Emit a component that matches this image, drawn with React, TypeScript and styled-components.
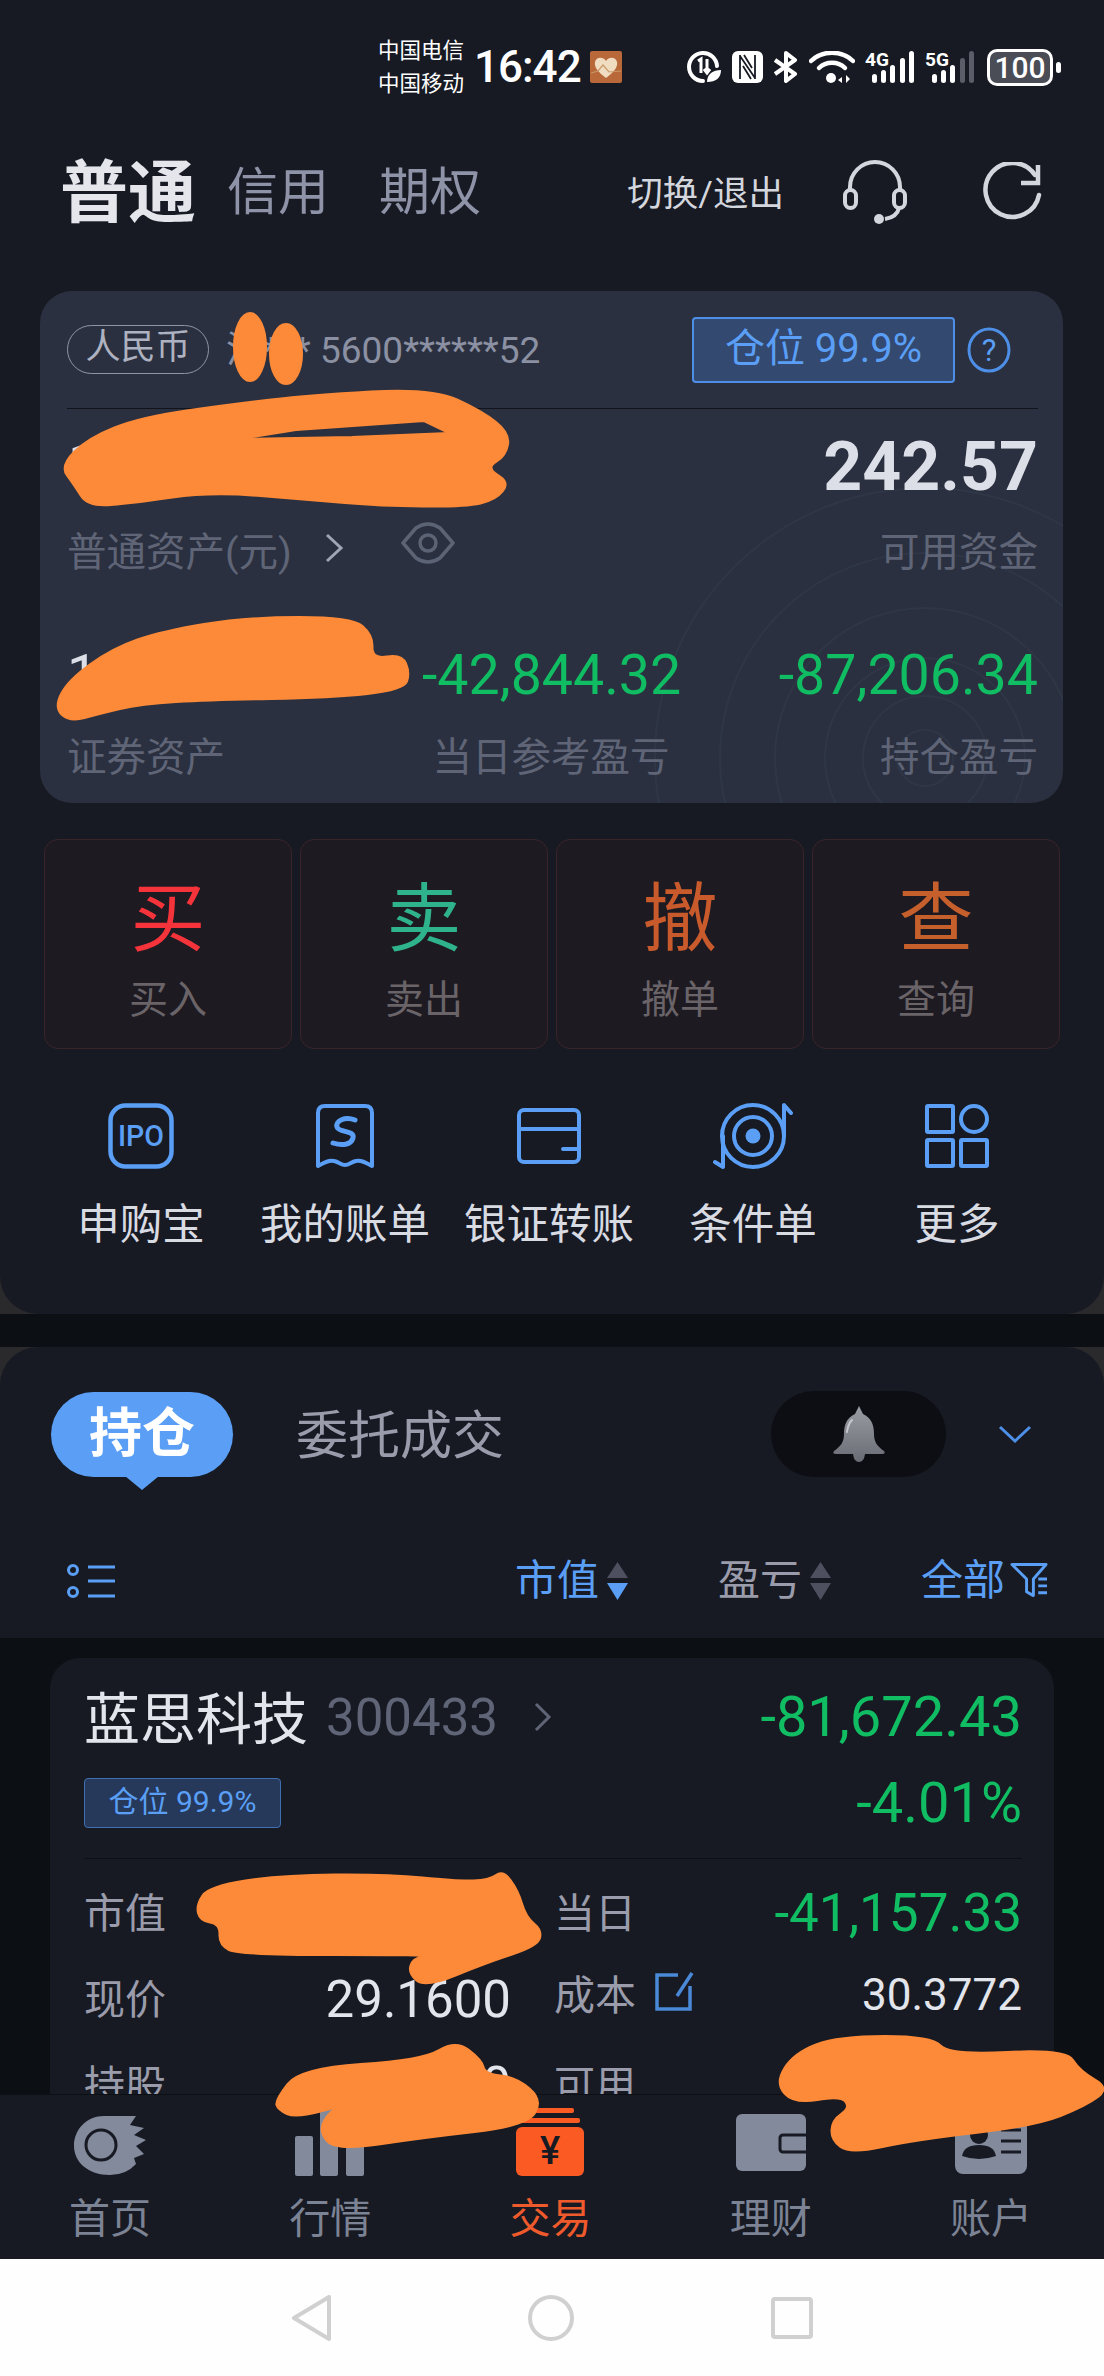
import React from 'react'
import styled, { createGlobalStyle } from 'styled-components'

const GlobalStyle = createGlobalStyle`
  html, body {
    margin: 0;
    padding: 0;
    background: #171a23;
  }
  * {
    box-sizing: border-box;
  }
`

const BLUE = '#5a9ff5'
const GREEN = '#10bd63'
const ORANGE = '#fd8a38'
const FONT = `Roboto, "Noto Sans CJK SC", sans-serif`

const Page = styled.div`
  position: relative;
  width: 1104px;
  height: 2376px;
  overflow: hidden;
  display: flex;
  flex-direction: column;
  font-family: ${FONT};
  background: #0c0f14;
`

/* top panel */
const CornerBack = styled.div`
  background: #2a2a2d;
`

const TopPanel = styled.section`
  height: 1314px;
  background: #171a23;
  border-radius: 0 0 38px 38px;
`

const StatusBar = styled.div`
  height: 134px;
  padding: 0 44px 0 378px;
  display: flex;
  align-items: center;
  color: #fff;
`

const Carriers = styled.div`
  font-size: 21.5px;
  line-height: 33px;
  width: 96px;
`

const Clock = styled.div`
  font-size: 44px;
  font-weight: 500;
  width: 116px;
  letter-spacing: -1px;
`

const StatusIcons = styled.div`
  margin-left: auto;
  display: flex;
  align-items: center;
  gap: 10px;
`

const Battery = styled.div`
  position: relative;
  width: 66px;
  height: 37px;
  margin-left: 2px;
  margin-right: 7px;
  border: 3px solid #fff;
  border-radius: 10px;
  background: #4a4c56;
  font-size: 30px;
  font-weight: 500;
  line-height: 31px;
  text-align: center;

  &::after {
    content: '';
    position: absolute;
    right: -11px;
    top: 10px;
    width: 5px;
    height: 11px;
    border-radius: 3px;
    background: #fff;
  }
`

const Header = styled.header`
  height: 112px;
  padding: 0 62px 0 60px;
  display: flex;
  align-items: center;
`

const MainTab = styled.div`
  font-size: 68px;
  font-weight: 700;
  color: #e4e6ec;
  width: 167px;
  padding-bottom: 6px;
`

const SubTab = styled.div`
  font-size: 51px;
  color: #8f93a8;
  width: 152px;
  padding-bottom: 5px;
`

const Switcher = styled.div`
  margin-left: auto;
  font-size: 35.5px;
  color: #d4d6de;
`

const HeaderIcon = styled.svg<{ $gap: number }>`
  margin-left: ${p => p.$gap}px;
  margin-top: 3px;
  flex: none;
`

/* account card */
const AccountCard = styled.div`
  position: relative;
  overflow: hidden;
  margin: 45px 41px 0 40px;
  height: 512px;
  padding: 0 25px 0 27px;
  border-radius: 32px;
  background: #2a303f;
`

const Rings = styled.svg`
  position: absolute;
  right: 0;
  bottom: 0;
`

const AccountTop = styled.div`
  position: relative;
  height: 118px;
  display: flex;
  align-items: center;
  border-bottom: 1px solid #12141b;
`

const CurrencyPill = styled.div`
  width: 142px;
  height: 49px;
  border: 1px solid #9096a6;
  border-radius: 25px;
  color: #aeb2c0;
  font-size: 35px;
  line-height: 44px;
  text-align: center;
`

const AccountNo = styled.div`
  margin-left: 17px;
  padding-bottom: 6px;
  font-size: 37px;
  color: #8b90a3;
`

const PositionBadge = styled.div`
  margin-left: auto;
  width: 263px;
  height: 66px;
  border: 2px solid #4d8fe6;
  border-radius: 4px;
  background: #33496f;
  color: ${BLUE};
  font-size: 40px;
  line-height: 60px;
  text-align: center;
`

const HelpIcon = styled.svg`
  margin: 0 27px 0 12px;
  flex: none;
`

const AssetRow = styled.div`
  position: relative;
  padding-top: 23px;
  display: flex;
  justify-content: space-between;
`

const ProfitRow = styled.div`
  position: relative;
  margin-top: 67px;
  display: grid;
  grid-template-columns: 355px 258px 1fr;
`

const Stat = styled.div<{ $align?: string }>`
  text-align: ${p => p.$align || 'left'};
`

const BigValue = styled.div`
  height: 70px;
  font-size: 68px;
  font-weight: 700;
  line-height: 70px;
  color: #dcdfe7;
`

const ProfitValue = styled.div<{ $color?: string }>`
  height: 70px;
  font-size: 55.5px;
  line-height: 70px;
  white-space: nowrap;
  color: ${p => p.$color || GREEN};
`

const StatLabel = styled.div<{ $top: number }>`
  margin-top: ${p => p.$top}px;
  display: flex;
  align-items: center;
  height: 52px;
  font-size: 39.5px;
  color: #5f6577;
  white-space: nowrap;
  justify-content: inherit;
`

const CenterLabel = styled(StatLabel)`
  justify-content: center;
`

const EndLabel = styled(StatLabel)`
  justify-content: flex-end;
`

const LabelIcon = styled.svg<{ $left: number; $lift?: number }>`
  margin-left: ${p => p.$left}px;
  margin-top: ${p => -(p.$lift || 0)}px;
  flex: none;
`

/* trade buttons */
const TradeGrid = styled.div`
  margin: 36px 0 0 44px;
  display: grid;
  grid-template-columns: repeat(4, 248px);
  gap: 8px;
`

const TradeButton = styled.div`
  height: 210px;
  padding-top: 39px;
  text-align: center;
  background: #1d1a22;
  border: 1px solid #3a2329;
  border-radius: 14px;
`

const TradeChar = styled.div<{ $color: string }>`
  font-size: 75px;
  line-height: 80px;
  color: ${p => p.$color};
`

const TradeLabel = styled.div`
  margin-top: 16px;
  font-size: 39px;
  line-height: 50px;
  color: #6a6468;
`

const ShortcutGrid = styled.div`
  margin: 54px 0 0 39px;
  display: grid;
  grid-template-columns: repeat(5, 204px);
`

const Shortcut = styled.div`
  display: flex;
  flex-direction: column;
  align-items: center;
`

const ShortcutIcon = styled.div`
  height: 66px;
  display: flex;
  align-items: center;
  justify-content: center;
`

const ShortcutLabel = styled.div`
  margin-top: 31px;
  font-size: 42.5px;
  line-height: 50px;
  color: #d9dbe3;
  white-space: nowrap;
`

const PanelGap = styled.div`
  height: 33px;
  background: #0c0f14;
`

/* positions panel */
const PositionPanel = styled.section`
  height: 291px;
  padding-top: 44px;
  background: #171a23;
  border-radius: 38px 38px 0 0;
`

const TabRow = styled.div`
  padding: 0 55px 0 51px;
  display: flex;
  align-items: center;
`

const Bubble = styled.div`
  position: relative;
  width: 182px;
  height: 85px;
  border-radius: 43px;
  background: ${BLUE};
  color: #fff;
  font-size: 53px;
  font-weight: 700;
  line-height: 84px;
  text-align: center;

  &::after {
    content: '';
    position: absolute;
    left: 74px;
    bottom: -13px;
    border-left: 17px solid transparent;
    border-right: 17px solid transparent;
    border-top: 14px solid ${BLUE};
  }
`

const OrdersTab = styled.div`
  margin-left: 63px;
  padding-bottom: 6px;
  font-size: 52px;
  color: #9a9cab;
`

const BellPill = styled.div`
  margin-left: auto;
  width: 175px;
  height: 86px;
  border-radius: 43px;
  background: #0c0e13;
  display: flex;
  align-items: center;
  justify-content: center;
`

const Chevron = styled.svg`
  margin-left: 52px;
  margin-right: 17px;
  flex: none;
`

const SortRow = styled.div`
  margin-top: 79px;
  height: 50px;
  padding: 0 56px 0 67px;
  display: flex;
  align-items: center;
`

const SortGroup = styled.div`
  margin-left: auto;
  display: flex;
  gap: 90px;
`

const SortItem = styled.div<{ $active?: boolean; $gap?: number }>`
  display: flex;
  align-items: center;
  gap: ${p => p.$gap || 8}px;
  font-size: 42px;
  line-height: 50px;
  color: ${p => (p.$active ? BLUE : '#9a9cab')};
`

const PositionList = styled.div`
  flex: 1;
  min-height: 0;
  overflow: hidden;
  padding: 20px 50px 0;
  background: #0c0f14;
`

const StockCard = styled.div`
  height: 600px;
  padding: 29px 32px 0 34px;
  border-radius: 30px 30px 0 0;
  background: #171a23;
`

const StockRow = styled.div<{ $top?: number }>`
  height: 60px;
  margin-top: ${p => p.$top || 0}px;
  display: flex;
  align-items: center;
  justify-content: space-between;
`

const StockTitle = styled.div`
  display: flex;
  align-items: center;
`

const StockName = styled.div`
  padding-bottom: 6px;
  font-size: 56px;
  color: #e3e5ec;
`

const StockCode = styled.div`
  margin-left: 18px;
  font-size: 51px;
  color: #5f6477;
`

const StockProfit = styled.div`
  font-size: 56px;
  color: ${GREEN};
`

const SmallBadge = styled.div`
  width: 197px;
  height: 50px;
  border: 1px solid #3f6fb0;
  border-radius: 4px;
  background: #26395a;
  color: ${BLUE};
  font-size: 30px;
  line-height: 46px;
  text-align: center;
`

const StockDivider = styled.div`
  height: 1px;
  margin-top: 25px;
  background: #0d0f14;
`

const DetailGrid = styled.div`
  padding-top: 11px;
  display: grid;
  grid-template-columns: 427px 1fr;
  grid-auto-rows: 86px;
  column-gap: 43px;
`

const DetailCell = styled.div<{ $raised?: boolean }>`
  display: flex;
  align-items: center;
  justify-content: space-between;
  padding-bottom: ${p => (p.$raised ? 8 : 0)}px;
`

const DetailLabel = styled.div`
  display: flex;
  align-items: center;
  padding-bottom: 6px;
  font-size: 41px;
  color: #9a9cab;
`

const DetailValue = styled.div<{ $size: number; $color?: string }>`
  font-size: ${p => p.$size}px;
  color: ${p => p.$color || '#e3e5ec'};
`

/* tab bar */
const TabBar = styled.nav`
  height: 165px;
  flex: none;
  padding: 13px 3px 0 0;
  border-top: 1px solid #0c0f14;
  background: #171a23;
  display: grid;
  grid-template-columns: repeat(5, 1fr);
`

const TabItem = styled.div<{ $active?: boolean }>`
  display: flex;
  flex-direction: column;
  align-items: center;
  color: ${p => (p.$active ? '#ee5a2b' : '#7c8394')};
`

const TabIcon = styled.div`
  height: 68px;
  display: flex;
  align-items: flex-end;
  justify-content: center;
`

const TabLabel = styled.div`
  margin-top: 18px;
  font-size: 41px;
  line-height: 50px;
`

const SystemNav = styled.div`
  height: 117px;
  flex: none;
  background: #fefefe;
  display: flex;
  align-items: center;
  justify-content: center;
  gap: 197px;
`

const Scribbles = styled.svg`
  position: absolute;
  left: 0;
  top: 0;
`

// closed curve through the midpoints of a marker outline
const smooth = (pts: number[][]) => {
  const mid = (a: number[], b: number[]) => `${(a[0] + b[0]) / 2} ${(a[1] + b[1]) / 2}`
  let d = `M${mid(pts[pts.length - 1], pts[0])}`
  pts.forEach((p, i) => {
    d += ` Q${p[0]} ${p[1]} ${mid(p, pts[(i + 1) % pts.length])}`
  })
  return d + ' Z'
}

const blobs = [
  [[60, 466], [88, 438], [141, 417], [232, 404], [310, 395], [432, 388], [482, 411], [510, 433], [506, 456], [486, 468], [510, 482], [496, 500], [465, 507], [380, 506], [310, 500], [211, 492], [134, 503], [88, 507], [74, 485]],
  [[54, 708], [68, 680], [113, 648], [162, 631], [246, 617], [352, 617], [373, 635], [372, 659], [402, 654], [410, 673], [404, 690], [331, 698], [211, 700], [141, 704], [99, 714], [70, 722]],
  [[196, 1905], [209, 1886], [282, 1875], [387, 1874], [458, 1881], [489, 1880], [503, 1870], [518, 1890], [526, 1917], [542, 1930], [538, 1946], [486, 1963], [425, 1988], [408, 1973], [413, 1958], [433, 1955], [239, 1955], [219, 1945], [220, 1924], [200, 1921]],
  [[275, 2100], [300, 2068], [422, 2060], [456, 2040], [482, 2060], [485, 2074], [516, 2077], [543, 2100], [527, 2126], [422, 2138], [335, 2151], [318, 2130], [331, 2110], [345, 2105], [296, 2118], [278, 2110]],
  [[775, 2083], [794, 2053], [838, 2036], [932, 2036], [949, 2055], [1066, 2049], [1080, 2071], [1110, 2088], [1086, 2106], [1035, 2126], [915, 2140], [850, 2154], [831, 2140], [832, 2120], [850, 2108], [841, 2096], [794, 2104]],
]

const blobHole = 'M239 439 L296 430 L424 421 L449 433 L352 437 Z'

const trades = [
  { char: '买', label: '买入', color: '#f5333a' },
  { char: '卖', label: '卖出', color: '#2fb38c' },
  { char: '撤', label: '撤单', color: '#c85a2b' },
  { char: '查', label: '查询', color: '#c55f2c' },
]

const blueLine = { fill: 'none', stroke: BLUE, strokeWidth: 4 }

const IpoIcon = () => (
  <svg width="66" height="66" viewBox="0 0 66 66">
    <rect x="2.5" y="2.5" width="61" height="61" rx="15" fill="none" stroke={BLUE} strokeWidth="4.5" />
    <text x="33" y="43" textAnchor="middle" fontFamily="Roboto" fontSize="29" fontWeight="500" textLength="46" lengthAdjust="spacingAndGlyphs" fill={BLUE}>IPO</text>
  </svg>
)

const BillIcon = () => (
  <svg width="60" height="66" viewBox="0 0 60 66">
    <path d="M3 63 V10 Q3 3 10 3 H50 Q57 3 57 10 V63 C50 59 46 57 41 58 C36 59 34 62 30 62 C26 62 24 59 19 58 C14 57 10 59 3 63 Z" {...blueLine} strokeLinejoin="round" />
    <path d="M40 17 C30 13 20 18 22 24 C24 30 40 27 38 35 C36 42 27 43 18 40" fill="none" stroke={BLUE} strokeWidth="5" strokeLinecap="round" />
  </svg>
)

const TransferIcon = () => (
  <svg width="64" height="56" viewBox="0 0 64 56">
    <rect x="2" y="2" width="60" height="52" rx="5" {...blueLine} />
    <path d="M2 21 H62 M46 41 H62" {...blueLine} strokeLinecap="round" />
  </svg>
)

const TargetIcon = () => (
  <svg width="80" height="72" viewBox="0 0 80 72">
    <circle cx="40" cy="36" r="31" {...blueLine} />
    <circle cx="40" cy="36" r="19" {...blueLine} />
    <circle cx="40" cy="36" r="7.5" fill={BLUE} />
    <path d="M78 13 L71 5 V36 M2 62 L10 67 V36" {...blueLine} strokeLinecap="round" strokeLinejoin="round" />
  </svg>
)

const MoreIcon = () => (
  <svg width="64" height="64" viewBox="0 0 64 64">
    <rect x="2" y="2" width="26" height="26" rx="1" {...blueLine} />
    <circle cx="49" cy="15" r="13" {...blueLine} />
    <rect x="2" y="36" width="26" height="26" rx="1" {...blueLine} />
    <rect x="36" y="36" width="26" height="26" rx="1" {...blueLine} />
  </svg>
)

const shortcuts = [
  { label: '申购宝', icon: <IpoIcon /> },
  { label: '我的账单', icon: <BillIcon /> },
  { label: '银证转账', icon: <TransferIcon /> },
  { label: '条件单', icon: <TargetIcon /> },
  { label: '更多', icon: <MoreIcon /> },
]

const SortArrows = ({ down, up }: { down?: boolean; up?: boolean }) => (
  <svg width="21" height="38" viewBox="0 0 21 38">
    <path d="M10.5 0 L21 16 H0 Z" fill={up ? BLUE : '#4e5060'} />
    <path d="M10.5 38 L21 21 H0 Z" fill={down ? BLUE : '#4e5060'} />
  </svg>
)

const SignalIcon = ({ label, dim }: { label: string; dim?: boolean }) => (
  <svg width="50" height="32" viewBox="0 0 50 32">
    <text x="0" y="15" fontFamily="Roboto" fontSize="19" fontWeight="700" fill="#fff" textLength="24" lengthAdjust="spacingAndGlyphs">{label}</text>
    <rect x="7" y="23" width="5" height="9" rx="2.5" fill="#fff" />
    <rect x="16" y="19" width="5" height="13" rx="2.5" fill="#fff" />
    <rect x="25" y="14" width="5" height="18" rx="2.5" fill="#fff" />
    <rect x="35" y="7" width="5" height="25" rx="2.5" fill={dim ? '#5b5e68' : '#fff'} />
    <rect x="44" y="0" width="5" height="32" rx="2.5" fill={dim ? '#5b5e68' : '#fff'} />
  </svg>
)

export default function App() {
  return (
    <Page>
      <GlobalStyle />
      <CornerBack>
        <TopPanel>
          <StatusBar>
            <Carriers>中国电信<br />中国移动</Carriers>
            <Clock>16:42</Clock>
            <svg width="32" height="32" viewBox="0 0 32 32">
              <rect width="32" height="32" rx="2" fill="#b9683a" />
              <path d="M16 27 C8 21 4 16 5 11 C6 6 13 5 16 10 C19 5 26 6 27 11 C28 16 24 21 16 27 Z" fill="#f0dcc0" />
              <path d="M1 22 L8 20 L13 14 L19 21 L31 20" fill="none" stroke="#c99a6a" strokeWidth="1.2" />
            </svg>
            <StatusIcons>
              <svg width="36" height="32" viewBox="0 0 36 32">
                <path d="M17 30 A14 14 0 1 1 31 15" fill="none" stroke="#fff" strokeWidth="4" strokeLinecap="round" />
                <path d="M12 10 L15 8 V22 M21 8 V21 M18 18 L21 22 L24 18" fill="none" stroke="#fff" strokeWidth="3" />
                <path d="M21 31 C21 23 27 19 35 19 C35 27 30 31 21 31 Z" fill="#fff" />
              </svg>
              <svg width="31" height="32" viewBox="0 0 31 32">
                <rect x="0" y="0" width="31" height="32" rx="6" fill="#fff" />
                <path d="M8 4 V28 M23 4 V28 M8 5 L23 27 M12 4 L20 17 M11 15 L19 28" fill="none" stroke="#171a23" strokeWidth="1.8" />
              </svg>
              <svg width="26" height="32" viewBox="0 0 26 32">
                <path d="M2 9 L22 23 L13 30 V2 L22 9 L2 23" fill="none" stroke="#fff" strokeWidth="4" strokeLinejoin="round" />
              </svg>
              <svg width="46" height="32" viewBox="0 0 46 32">
                <path d="M2 10 C13 -1 33 -1 44 10" fill="none" stroke="#fff" strokeWidth="4.5" strokeLinecap="round" />
                <path d="M10 17 C17 10 29 10 36 17" fill="none" stroke="#fff" strokeWidth="4.5" strokeLinecap="round" />
                <circle cx="22" cy="27" r="5" fill="#fff" />
                <path d="M33 26 L29 29 L33 32 Z M37 24 L41 28 L37 32 Z" fill="#fff" />
              </svg>
              <SignalIcon label="4G" />
              <SignalIcon label="5G" dim />
              <Battery>100</Battery>
            </StatusIcons>
          </StatusBar>

          <Header>
            <MainTab>普通</MainTab>
            <SubTab>信用</SubTab>
            <SubTab>期权</SubTab>
            <Switcher>切换/退出</Switcher>
            <HeaderIcon $gap={58} width="66" height="64" viewBox="0 0 66 64">
              <path d="M8 30 V27 A25 25 0 0 1 58 27 V30" fill="none" stroke="#d4d6de" strokeWidth="4" />
              <rect x="3" y="30" width="11" height="18" rx="5.5" fill="none" stroke="#d4d6de" strokeWidth="4" />
              <rect x="52" y="30" width="11" height="18" rx="5.5" fill="none" stroke="#d4d6de" strokeWidth="4" />
              <path d="M57 48 Q55 57 43 59" fill="none" stroke="#d4d6de" strokeWidth="4" />
              <circle cx="37" cy="59" r="5" fill="#d4d6de" />
            </HeaderIcon>
            <HeaderIcon $gap={74} width="60" height="60" viewBox="0 0 60 60">
              <path d="M53 13 A27 27 0 1 0 57 33" fill="none" stroke="#d4d6de" strokeWidth="4.5" strokeLinecap="round" />
              <path d="M56 3 V21 H39" fill="none" stroke="#d4d6de" strokeWidth="4.5" />
            </HeaderIcon>
          </Header>

          <AccountCard>
            <Rings width="420" height="400" viewBox="0 0 420 400" fill="none" stroke="#2f3646" strokeWidth="2">
              <circle cx="282" cy="355" r="28" />
              <circle cx="282" cy="355" r="62" />
              <circle cx="282" cy="355" r="100" />
              <circle cx="282" cy="355" r="150" />
              <circle cx="282" cy="355" r="205" />
              <circle cx="282" cy="355" r="270" />
            </Rings>
            <AccountTop>
              <CurrencyPill>人民币</CurrencyPill>
              <AccountNo>沪*** 5600******52</AccountNo>
              <PositionBadge>仓位 99.9%</PositionBadge>
              <HelpIcon width="44" height="46" viewBox="0 0 44 46">
                <ellipse cx="22" cy="23" rx="20" ry="21" fill="none" stroke="#4d8fe6" strokeWidth="3" />
                <text x="22" y="34" textAnchor="middle" fontFamily="Roboto" fontSize="31" fill={BLUE}>?</text>
              </HelpIcon>
            </AccountTop>

            <AssetRow>
              <Stat>
                <BigValue>1</BigValue>
                <StatLabel $top={20}>
                  普通资产(元)
                  <LabelIcon $left={33} width="19" height="30" viewBox="0 0 19 30">
                    <path d="M2 2 L16 15 L2 28" fill="none" stroke="#a0a5b4" strokeWidth="3" />
                  </LabelIcon>
                  <LabelIcon $left={56} $lift={10} width="56" height="44" viewBox="0 0 56 44">
                    <path d="M3 22 L16 7 Q28 -1 40 7 L53 22 L40 37 Q28 45 16 37 Z" fill="none" stroke="#5c6375" strokeWidth="3.5" strokeLinejoin="round" />
                    <circle cx="28" cy="22" r="8" fill="none" stroke="#5c6375" strokeWidth="3.5" />
                  </LabelIcon>
                </StatLabel>
              </Stat>
              <Stat $align="right">
                <BigValue>242.57</BigValue>
                <EndLabel $top={20}>可用资金</EndLabel>
              </Stat>
            </AssetRow>

            <ProfitRow>
              <Stat>
                <ProfitValue $color="#dcdfe7">1</ProfitValue>
                <StatLabel $top={16}>证券资产</StatLabel>
              </Stat>
              <Stat $align="center">
                <ProfitValue>-42,844.32</ProfitValue>
                <CenterLabel $top={16}>当日参考盈亏</CenterLabel>
              </Stat>
              <Stat $align="right">
                <ProfitValue>-87,206.34</ProfitValue>
                <EndLabel $top={16}>持仓盈亏</EndLabel>
              </Stat>
            </ProfitRow>
          </AccountCard>

          <TradeGrid>
            {trades.map(t => (
              <TradeButton key={t.char}>
                <TradeChar $color={t.color}>{t.char}</TradeChar>
                <TradeLabel>{t.label}</TradeLabel>
              </TradeButton>
            ))}
          </TradeGrid>

          <ShortcutGrid>
            {shortcuts.map(s => (
              <Shortcut key={s.label}>
                <ShortcutIcon>{s.icon}</ShortcutIcon>
                <ShortcutLabel>{s.label}</ShortcutLabel>
              </Shortcut>
            ))}
          </ShortcutGrid>
        </TopPanel>
      </CornerBack>

      <PanelGap />

      <CornerBack>
        <PositionPanel>
          <TabRow>
            <Bubble>持仓</Bubble>
            <OrdersTab>委托成交</OrdersTab>
            <BellPill>
              <svg width="54" height="56" viewBox="0 0 54 56">
                <defs>
                  <linearGradient id="bellFill" x1="0" y1="0" x2="0" y2="1">
                    <stop offset="0" stopColor="#9a9ca4" />
                    <stop offset="1" stopColor="#6a6c75" />
                  </linearGradient>
                </defs>
                <path d="M27 0 L31 8 C40 12 42 20 42 28 C42 36 45 40 52 45 Q54 48 50 48 H33 Q32 56 27 56 Q22 56 21 48 H4 Q0 48 2 45 C9 40 12 36 12 28 C12 20 14 12 23 8 Z" fill="url(#bellFill)" />
                <path d="M20 14 Q16 18 15 26" fill="none" stroke="#c5c7cd" strokeWidth="2" strokeLinecap="round" />
              </svg>
            </BellPill>
            <Chevron width="34" height="18" viewBox="0 0 34 18">
              <path d="M2 2 L17 16 L32 2" fill="none" stroke="#4d8fe6" strokeWidth="3" />
            </Chevron>
          </TabRow>

          <SortRow>
            <svg width="48" height="38" viewBox="0 0 48 38">
              <circle cx="6" cy="8" r="4.5" fill="none" stroke={BLUE} strokeWidth="3" />
              <circle cx="6" cy="30" r="4.5" fill="none" stroke={BLUE} strokeWidth="3" />
              <path d="M21 5 H48 M21 19 H48 M21 34 H48" stroke={BLUE} strokeWidth="3" />
            </svg>
            <SortGroup>
              <SortItem $active>市值<SortArrows down /></SortItem>
              <SortItem>盈亏<SortArrows /></SortItem>
              <SortItem $active $gap={5}>
                全部
                <svg width="38" height="38" viewBox="0 0 39 38">
                  <path d="M2 2 H37 L24 17 V34 L17 30 V17 Z" fill="none" stroke={BLUE} strokeWidth="3" strokeLinejoin="round" />
                  <path d="M29 17 H38 M29 24 H38 M29 31 H38" stroke={BLUE} strokeWidth="3" />
                </svg>
              </SortItem>
            </SortGroup>
          </SortRow>
        </PositionPanel>
      </CornerBack>

      <PositionList>
        <StockCard>
          <StockRow>
            <StockTitle>
              <StockName>蓝思科技</StockName>
              <StockCode>300433</StockCode>
              <LabelIcon $left={36} width="18" height="30" viewBox="0 0 18 30">
                <path d="M2 2 L15 15 L2 28" fill="none" stroke="#5f6477" strokeWidth="3" />
              </LabelIcon>
            </StockTitle>
            <StockProfit>-81,672.43</StockProfit>
          </StockRow>
          <StockRow $top={26}>
            <SmallBadge>仓位 99.9%</SmallBadge>
            <StockProfit>-4.01%</StockProfit>
          </StockRow>
          <StockDivider />
          <DetailGrid>
            <DetailCell>
              <DetailLabel>市值</DetailLabel>
            </DetailCell>
            <DetailCell>
              <DetailLabel>当日</DetailLabel>
              <DetailValue $size={53} $color={GREEN}>-41,157.33</DetailValue>
            </DetailCell>
            <DetailCell>
              <DetailLabel>现价</DetailLabel>
              <DetailValue $size={51}>29.1600</DetailValue>
            </DetailCell>
            <DetailCell $raised>
              <DetailLabel>
                成本
                <LabelIcon $left={18} width="40" height="40" viewBox="0 0 40 40">
                  <path d="M24 3 H3 V37 H36 V14" fill="none" stroke="#4a88d8" strokeWidth="3.5" />
                  <path d="M38 1 L23 24" fill="none" stroke="#4a88d8" strokeWidth="3.5" />
                </LabelIcon>
              </DetailLabel>
              <DetailValue $size={44}>30.3772</DetailValue>
            </DetailCell>
            <DetailCell>
              <DetailLabel>持股</DetailLabel>
              <DetailValue $size={51}>0</DetailValue>
            </DetailCell>
            <DetailCell>
              <DetailLabel>可用</DetailLabel>
            </DetailCell>
          </DetailGrid>
        </StockCard>
      </PositionList>

      <TabBar>
        <TabItem>
          <TabIcon>
            <svg width="72" height="60" viewBox="0 0 72 60">
              <path d="M30 0 H62 L56 9 L70 12 L60 19 L72 24 L62 30 L70 38 L60 42 L62 48 Q52 59 36 59 C14 59 0 46 0 30 C0 13 13 0 30 0 Z" fill="#828a9c" />
              <circle cx="27" cy="29" r="15" fill="none" stroke="#171a23" strokeWidth="3" />
            </svg>
          </TabIcon>
          <TabLabel>首页</TabLabel>
        </TabItem>
        <TabItem>
          <TabIcon>
            <svg width="70" height="68" viewBox="0 0 70 68">
              <rect x="0" y="28" width="18" height="40" rx="2" fill="#828a9c" />
              <rect x="25" y="0" width="18" height="68" rx="2" fill="#828a9c" />
              <rect x="51" y="17" width="18" height="51" rx="2" fill="#828a9c" />
            </svg>
          </TabIcon>
          <TabLabel>行情</TabLabel>
        </TabItem>
        <TabItem $active>
          <TabIcon>
            <svg width="68" height="68" viewBox="0 0 68 68">
              <rect x="10" y="0" width="48" height="5" rx="2" fill="#fb5a23" />
              <rect x="4" y="10" width="60" height="5" rx="2" fill="#fb5a23" />
              <rect x="0" y="19" width="68" height="49" rx="6" fill="#fb5a23" />
              <text x="34" y="56" textAnchor="middle" fontFamily="Roboto" fontSize="38" fontWeight="500" fill="#171a23">¥</text>
            </svg>
          </TabIcon>
          <TabLabel>交易</TabLabel>
        </TabItem>
        <TabItem>
          <TabIcon>
            <svg width="70" height="62" viewBox="0 0 70 62">
              <rect x="0" y="0" width="70" height="57" rx="6" fill="#828a9c" />
              <rect x="44" y="21" width="30" height="17" rx="3" fill="none" stroke="#171a23" strokeWidth="3" />
            </svg>
          </TabIcon>
          <TabLabel>理财</TabLabel>
        </TabItem>
        <TabItem>
          <TabIcon>
            <svg width="72" height="60" viewBox="0 0 72 60">
              <rect x="0" y="0" width="72" height="58" rx="8" fill="#828a9c" />
              <circle cx="24" cy="19" r="9" fill="#171a23" />
              <path d="M7 40 Q9 29 24 29 Q39 29 41 40 Q24 46 7 40 Z" fill="#171a23" />
              <path d="M46 14 H66 M46 25 H66 M46 36 H66" stroke="#171a23" strokeWidth="3" />
            </svg>
          </TabIcon>
          <TabLabel>账户</TabLabel>
        </TabItem>
      </TabBar>

      <SystemNav>
        <svg width="39" height="46" viewBox="0 0 39 46">
          <path d="M37 2 V44 L2 23 Z" fill="none" stroke="#d0d0d0" strokeWidth="4" strokeLinejoin="round" />
        </svg>
        <svg width="46" height="46" viewBox="0 0 46 46">
          <circle cx="23" cy="23" r="21" fill="none" stroke="#d0d0d0" strokeWidth="4" />
        </svg>
        <svg width="42" height="42" viewBox="0 0 42 42">
          <rect x="2" y="2" width="38" height="38" rx="2" fill="none" stroke="#d0d0d0" strokeWidth="4" />
        </svg>
      </SystemNav>

      <Scribbles width="1104" height="2376" viewBox="0 0 1104 2376">
        <g fill={ORANGE} stroke={ORANGE} strokeWidth="2" strokeLinejoin="round" fillRule="evenodd">
          <path d={`${smooth(blobs[0])} ${blobHole}`} />
          {blobs.slice(1).map(b => <path key={b[0].join()} d={smooth(b)} />)}
          <ellipse cx="250" cy="347" rx="16" ry="34" />
          <ellipse cx="286" cy="354" rx="16" ry="30" />
        </g>
      </Scribbles>
    </Page>
  )
}
